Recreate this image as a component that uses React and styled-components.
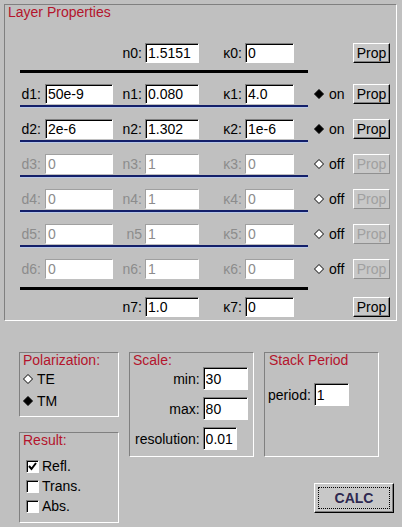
import React from 'react';
import styled, { createGlobalStyle } from 'styled-components';

const GlobalStyle = createGlobalStyle`
    html, body {
        margin: 0;
        padding: 0;
        background: #c0c0c0;
    }
    body {
        font-family: "Liberation Sans", Arial, sans-serif;
        font-size: 14px;
        color: #000;
    }
`;

const Page = styled.div`
    width: 402px;
    height: 527px;
    padding: 4px 0 0 4px;
    box-sizing: border-box;
`;

const Panel = styled.div`
    width: 393px;
    height: 317px;
    box-sizing: border-box;
    border: 1px solid;
    border-color: #808080 #fff #fff #808080;
`;

const PanelTitle = styled.div`
    color: #b4142c;
    line-height: 14px;
    margin: 0 0 0 3px;
`;

const Row = styled.div`
    display: grid;
    grid-template-columns: 40px 68px 32px 54px 46px 49px 59px 37px;
    align-items: center;
    height: 20px;
    margin-top: ${(p) => p.$top}px;
`;

const Label = styled.span`
    justify-self: end;
    padding-right: ${(p) => (p.$pad != null ? p.$pad : 3)}px;
    color: ${(p) => (p.$off ? '#8c8c8c' : '#000')};
    white-space: nowrap;
`;

const Field = styled.input`
    box-sizing: border-box;
    width: ${(p) => p.$w}px;
    height: ${(p) => p.$h || 20}px;
    margin: 0;
    padding: 0 2px;
    font-family: "Liberation Sans", Arial, sans-serif;
    font-size: 14px;
    background: #fff;
    color: #000;
    border: 1px solid;
    border-color: #808080 #fff #fff #808080;
    box-shadow: inset 1px 1px #000;
    outline: none;

    &:disabled {
        color: #8c8c8c;
        border-color: #a0a0a0 #fff #fff #a0a0a0;
        box-shadow: none;
    }
`;

const Toggle = styled.span`
    display: flex;
    align-items: center;
    gap: 5px;
    padding-left: 20px;
`;

const PropButton = styled.button`
    box-sizing: border-box;
    width: 37px;
    height: 20px;
    padding: 0;
    font-family: "Liberation Sans", Arial, sans-serif;
    font-size: 14px;
    background: #c8c8c8;
    color: #000;
    border: 1px solid;
    border-color: #fff #000 #000 #fff;
    box-shadow: inset -1px -1px #808080;

    &:disabled {
        color: #a0a0a0;
        border-color: #fff #909090 #909090 #fff;
        box-shadow: none;
    }
`;

const Rule = styled.div`
    margin-left: 15px;
    width: 288px;
    box-sizing: border-box;
    margin-top: ${(p) => p.$top}px;
    height: 3px;
    background: ${(p) => (p.$blue ? '#14206a' : '#000')};
    border-bottom: ${(p) => (p.$blue ? '1px solid #b8c8e8' : 'none')};
`;

const Lower = styled.div`
    display: flex;
    align-items: flex-start;
    gap: 10px;
    margin: 31px 0 0 15px;
`;

const Column = styled.div`
    display: flex;
    flex-direction: column;
    gap: ${(p) => p.$gap || 0}px;
    width: ${(p) => p.$w}px;
`;

const GroupBox = styled.div`
    box-sizing: border-box;
    width: ${(p) => p.$w}px;
    height: ${(p) => p.$h}px;
    border: 1px solid;
    border-color: #808080 #fff #fff #808080;
`;

const GroupTitle = styled.div`
    color: #b4142c;
    line-height: 14px;
    padding-left: ${(p) => p.$pad || 3}px;
`;

const OptionRow = styled.div`
    display: flex;
    align-items: center;
    height: 20px;
    gap: ${(p) => p.$gap || 4}px;
    padding-left: ${(p) => p.$pad || 3}px;
    margin-top: ${(p) => p.$top || 0}px;
`;

const CheckBox = styled.span`
    box-sizing: border-box;
    width: 13px;
    height: 13px;
    display: flex;
    align-items: center;
    justify-content: center;
    background: #fff;
    border: 1px solid;
    border-color: #808080 #fff #fff #808080;
    box-shadow: inset 1px 1px #000;
`;

const ScaleGrid = styled.div`
    display: grid;
    grid-template-columns: auto auto;
    justify-content: start;
    align-items: center;
    column-gap: 3px;
    row-gap: 7px;
    padding-left: 5px;
`;

const PeriodRow = styled.div`
    display: flex;
    align-items: center;
    gap: 3px;
    padding-left: 3px;
    margin-top: 16px;
`;

const CalcButton = styled.button`
    align-self: flex-end;
    margin-top: 26px;
    box-sizing: border-box;
    width: 80px;
    height: 30px;
    padding: 3px;
    display: flex;
    background: #c8c8c8;
    border: 1px solid;
    border-color: #fff #000 #000 #fff;
    box-shadow: inset -1px -1px #808080;
`;

const FocusRing = styled.span`
    flex: 1;
    display: flex;
    align-items: center;
    justify-content: center;
    border: 1px dotted #000;
    font-family: "Liberation Sans", Arial, sans-serif;
    font-size: 14px;
    font-weight: bold;
    color: #2e2850;
`;

function Diamond({ on }) {
    return (
        <svg width="10" height="10" viewBox="0 0 10 10">
            <polygon
                points="5,0.5 9.5,5 5,9.5 0.5,5"
                fill={on ? '#000' : '#fff'}
                stroke="#000"
                strokeWidth="1"
            />
        </svg>
    );
}

function Check() {
    return (
        <svg width="11" height="11" viewBox="0 0 11 11">
            <path d="M2 5 L4.5 8 L9 2" fill="none" stroke="#000" strokeWidth="2" />
        </svg>
    );
}

const layers = [
    { i: 1, d: '50e-9', n: '0.080', k: '4.0', on: true },
    { i: 2, d: '2e-6', n: '1.302', k: '1e-6', on: true },
    { i: 3, d: '0', n: '1', k: '0', on: false },
    { i: 4, d: '0', n: '1', k: '0', on: false },
    { i: 5, d: '0', n: '1', k: '0', on: false, nNoColon: true },
    { i: 6, d: '0', n: '1', k: '0', on: false },
];

function LayerRow({ layer, top }) {
    const off = !layer.on;
    return (
        <Row $top={top}>
            <Label $off={off} $pad={4}>d{layer.i}:</Label>
            <Field $w={68} value={layer.d} readOnly disabled={off} />
            <Label $off={off}>n{layer.i}{layer.nNoColon ? '' : ':'}</Label>
            <Field $w={54} value={layer.n} readOnly disabled={off} />
            <Label $off={off}>κ{layer.i}:</Label>
            <Field $w={49} value={layer.k} readOnly disabled={off} />
            <Toggle>
                <Diamond on={layer.on} />
                {layer.on ? 'on' : 'off'}
            </Toggle>
            <PropButton type="button" disabled={off}>Prop</PropButton>
        </Row>
    );
}

function App() {
    return (
        <Page>
            <GlobalStyle />
            <Panel>
                <PanelTitle>Layer Properties</PanelTitle>
                <Row $top={24}>
                    <span />
                    <span />
                    <Label>n0:</Label>
                    <Field $w={54} value="1.5151" readOnly />
                    <Label>κ0:</Label>
                    <Field $w={49} value="0" readOnly />
                    <span />
                    <PropButton type="button">Prop</PropButton>
                </Row>
                <Rule $top={7} />
                {layers.map((layer, idx) => (
                    <React.Fragment key={layer.i}>
                        <LayerRow layer={layer} top={idx === 0 ? 11 : 11} />
                        {layer.i < 6 ? <Rule $blue $top={1} /> : <Rule $top={8} />}
                    </React.Fragment>
                ))}
                <Row $top={7}>
                    <span />
                    <span />
                    <Label>n7:</Label>
                    <Field $w={54} value="1.0" readOnly />
                    <Label>κ7:</Label>
                    <Field $w={49} value="0" readOnly />
                    <span />
                    <PropButton type="button">Prop</PropButton>
                </Row>
            </Panel>

            <Lower>
                <Column $w={100} $gap={15}>
                    <GroupBox $w={100} $h={65}>
                        <GroupTitle>Polarization:</GroupTitle>
                        <OptionRow $top={2}>
                            <Diamond on={false} />
                            TE
                        </OptionRow>
                        <OptionRow $top={2}>
                            <Diamond on />
                            TM
                        </OptionRow>
                    </GroupBox>
                    <GroupBox $w={100} $h={91}>
                        <GroupTitle>Result:</GroupTitle>
                        <OptionRow $top={9} $pad={6} $gap={3}>
                            <CheckBox>
                                <Check />
                            </CheckBox>
                            Refl.
                        </OptionRow>
                        <OptionRow $pad={6} $gap={3}>
                            <CheckBox />
                            Trans.
                        </OptionRow>
                        <OptionRow $pad={6} $gap={3}>
                            <CheckBox />
                            Abs.
                        </OptionRow>
                    </GroupBox>
                </Column>

                <GroupBox $w={125} $h={105}>
                    <GroupTitle>Scale:</GroupTitle>
                    <ScaleGrid>
                        <Label $pad={0}>min:</Label>
                        <Field $w={45} $h={23} value="30" readOnly />
                        <Label $pad={0}>max:</Label>
                        <Field $w={45} $h={23} value="80" readOnly />
                        <Label $pad={0}>resolution:</Label>
                        <Field $w={34} $h={23} value="0.01" readOnly />
                    </ScaleGrid>
                </GroupBox>

                <Column $w={130}>
                    <GroupBox $w={115} $h={105}>
                        <GroupTitle $pad={4}>Stack Period</GroupTitle>
                        <PeriodRow>
                            period:
                            <Field $w={35} $h={23} value="1" readOnly />
                        </PeriodRow>
                    </GroupBox>
                    <CalcButton type="button">
                        <FocusRing>CALC</FocusRing>
                    </CalcButton>
                </Column>
            </Lower>
        </Page>
    );
}

export default App;
